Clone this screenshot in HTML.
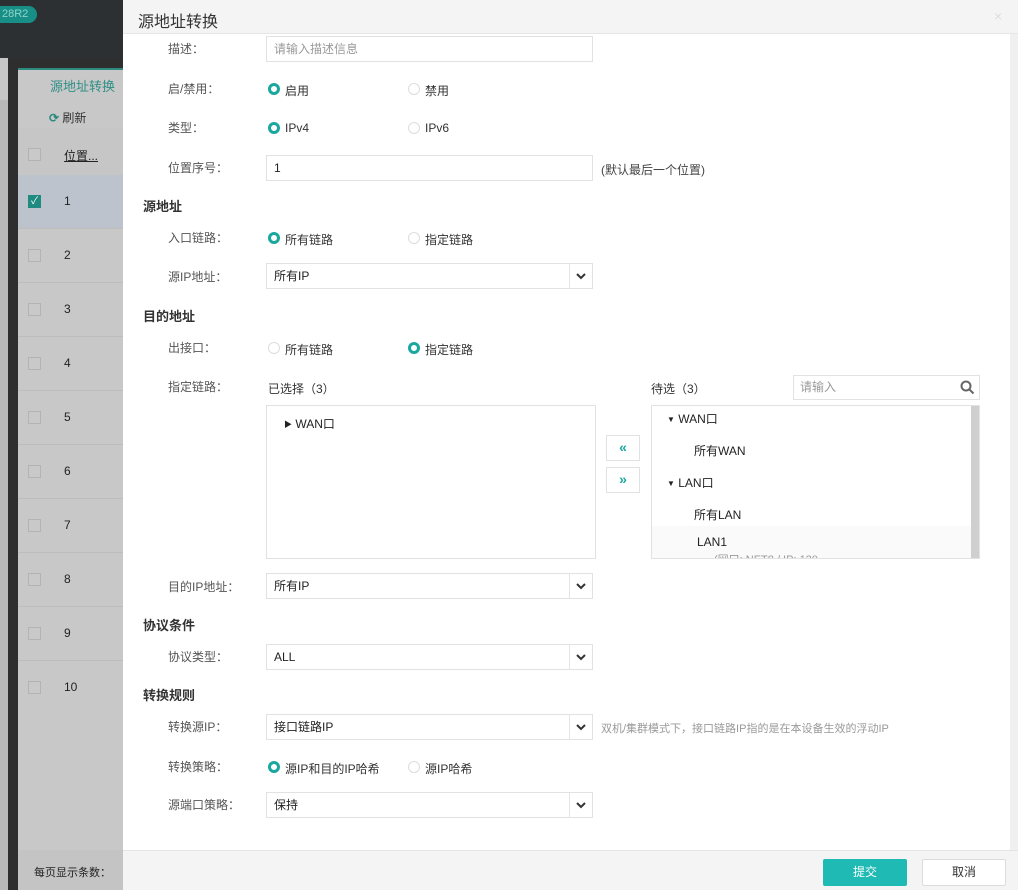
<!DOCTYPE html>
<html><head><meta charset="utf-8"><style>
*{box-sizing:border-box;margin:0;padding:0}
body{width:1018px;height:890px;position:relative;overflow:hidden;font-family:"Liberation Sans","Noto Sans CJK SC",sans-serif;font-size:12px;color:#333;background:#c6c6c6}
.a{position:absolute}
.lbl{position:absolute;left:168px;font-size:12px;color:#555;line-height:14px}
.sec{position:absolute;left:143px;font-size:13px;font-weight:bold;color:#333}
.inp{position:absolute;left:266px;width:327px;height:26px;border:1px solid #e2e2e2;background:#fff;padding-left:7px;line-height:24px;font-size:12px;color:#222}
.sel:after{content:"";position:absolute;right:22px;top:0;height:24px;border-left:1px solid #e4e4e4}
.chev{position:absolute;right:6px;top:8px}
.r{position:absolute;width:12px;height:12px;border-radius:50%;border:1px solid #ddd;background:#fff}
.r.on{border:3px solid #1aa89e}
.rt{position:absolute;font-size:12px;color:#333}
.row{position:absolute;left:18px;width:105px;height:54px;border-bottom:1px solid #bdbdbd}
.cb{position:absolute;left:10px;width:13px;height:13px;border:1px solid #b3b3b3;background:#c9c9c9}
.num{position:absolute;left:46px;font-size:12px;color:#222}
</style></head><body>
<!-- background page -->
<div class="a" style="left:0;top:0;width:123px;height:58px;background:#2c3033"></div>
<div class="a" style="left:0;top:6px;width:37px;height:17px;background:#178f86;border-radius:0 9px 9px 0;color:#8fd3cc;font-size:11px;line-height:17px;padding-left:2px">28R2</div>
<div class="a" style="left:0;top:58px;width:8px;height:832px;background:#b9b9b9"></div>
<div class="a" style="left:0;top:58px;width:8px;height:42px;background:#c7c7c7"></div>
<div class="a" style="left:8px;top:58px;width:10px;height:832px;background:#2e2e2e"></div>
<div class="a" style="left:18px;top:58px;width:105px;height:12px;background:#2e2e2e"></div>
<div class="a" style="left:18px;top:68px;width:105px;height:2px;background:#2f8a80"></div>
<div class="a" style="left:18px;top:70px;width:105px;height:780px;background:#c8c8c8"></div>
<div class="a" style="left:50px;top:76px;font-size:13px;color:#2f8f86">源地址转换</div>
<div class="a" style="left:49px;top:109px;font-size:12px;color:#333"><span style="color:#2b8a7f;font-weight:bold">⟳</span> 刷新</div>
<div class="row" style="top:128px;background:#c6c6c6"><div class="cb" style="top:20px"></div><div class="num" style="top:19px;text-decoration:underline">位置...</div></div>
<div class="row" style="top:175px;background:#bcc3cc"><div class="cb" style="top:20px;background:#1f8a80;border-color:#1f8a80;color:#fff;font-size:10px;line-height:11px;text-align:center">✓</div><div class="num" style="top:19px">1</div></div>
<div class="row" style="top:229px"><div class="cb" style="top:20px"></div><div class="num" style="top:19px">2</div></div>
<div class="row" style="top:283px"><div class="cb" style="top:20px"></div><div class="num" style="top:19px">3</div></div>
<div class="row" style="top:337px"><div class="cb" style="top:20px"></div><div class="num" style="top:19px">4</div></div>
<div class="row" style="top:391px"><div class="cb" style="top:20px"></div><div class="num" style="top:19px">5</div></div>
<div class="row" style="top:445px"><div class="cb" style="top:20px"></div><div class="num" style="top:19px">6</div></div>
<div class="row" style="top:499px"><div class="cb" style="top:20px"></div><div class="num" style="top:19px">7</div></div>
<div class="row" style="top:553px"><div class="cb" style="top:20px"></div><div class="num" style="top:19px">8</div></div>
<div class="row" style="top:607px"><div class="cb" style="top:20px"></div><div class="num" style="top:19px">9</div></div>
<div class="row" style="top:661px;border:0"><div class="cb" style="top:20px"></div><div class="num" style="top:19px">10</div></div>
<div class="a" style="left:18px;top:850px;width:105px;height:40px;background:#c4c4c4"></div>
<div class="a" style="left:34px;top:864px;font-size:11px;color:#222">每页显示条数：</div>

<!-- modal -->
<div class="a" style="left:123px;top:0;width:895px;height:890px;background:#fff"></div>
<div class="a" style="left:123px;top:0;width:895px;height:34px;background:#f4f4f4;border-bottom:1px solid #e6e6e6"></div>
<div class="a" style="left:138px;top:8px;font-size:16px;color:#333">源地址转换</div>
<div class="a" style="left:994px;top:8px;font-size:14px;color:#ddd">×</div>
<div class="a" style="left:1010px;top:34px;width:8px;height:816px;background:#f0f0f0"></div>

<div class="lbl" style="top:42px">描述：</div>
<div class="inp" style="top:36px;color:#999">请输入描述信息</div>
<div class="lbl" style="top:82px">启/禁用：</div>
<div class="r on" style="left:268px;top:83px"></div><div class="rt" style="left:285px;top:82px">启用</div>
<div class="r" style="left:408px;top:83px"></div><div class="rt" style="left:425px;top:82px">禁用</div>
<div class="lbl" style="top:121px">类型：</div>
<div class="r on" style="left:268px;top:122px"></div><div class="rt" style="left:285px;top:121px">IPv4</div>
<div class="r" style="left:408px;top:122px"></div><div class="rt" style="left:425px;top:121px">IPv6</div>
<div class="lbl" style="top:161px">位置序号：</div>
<div class="inp" style="top:155px">1</div>
<div class="a" style="left:601px;top:161px;color:#444">(默认最后一个位置)</div>

<div class="sec" style="top:196px">源地址</div>
<div class="lbl" style="top:231px">入口链路：</div>
<div class="r on" style="left:268px;top:232px"></div><div class="rt" style="left:285px;top:231px">所有链路</div>
<div class="r" style="left:408px;top:232px"></div><div class="rt" style="left:425px;top:231px">指定链路</div>
<div class="lbl" style="top:270px">源IP地址：</div>
<div class="inp sel" style="top:263px">所有IP<svg class="chev" width="10" height="8" viewBox="0 0 10 8"><path d="M1 2l4 4 4-4" stroke="#333" stroke-width="2" fill="none"/></svg></div>

<div class="sec" style="top:306px">目的地址</div>
<div class="lbl" style="top:341px">出接口：</div>
<div class="r" style="left:268px;top:342px"></div><div class="rt" style="left:285px;top:341px">所有链路</div>
<div class="r on" style="left:408px;top:342px"></div><div class="rt" style="left:425px;top:341px">指定链路</div>
<div class="lbl" style="top:380px">指定链路：</div>
<div class="a" style="left:268px;top:380px">已选择（3）</div>
<div class="a" style="left:266px;top:405px;width:330px;height:154px;border:1px solid #e2e2e2"></div>
<div class="a" style="left:284px;top:415px;font-size:12px;color:#222"><span style="font-size:8px;vertical-align:1px">▶</span> WAN口</div>
<div class="a" style="left:606px;top:435px;width:34px;height:26px;border:1px solid #e2e2e2;color:#1aa89e;text-align:center;line-height:22px;font-weight:bold;font-size:14px">«</div>
<div class="a" style="left:606px;top:467px;width:34px;height:26px;border:1px solid #e2e2e2;color:#1aa89e;text-align:center;line-height:22px;font-weight:bold;font-size:14px">»</div>
<div class="a" style="left:651px;top:380px">待选（3）</div>
<div class="a" style="left:793px;top:375px;width:187px;height:25px;border:1px solid #e2e2e2;padding-left:6px;line-height:23px;color:#999">请输入
<svg class="a" style="right:4px;top:4px" width="15" height="15" viewBox="0 0 15 15"><circle cx="6" cy="6" r="4.5" stroke="#666" stroke-width="2" fill="none"/><path d="M9.5 9.5l4 4" stroke="#666" stroke-width="2"/></svg></div>
<div class="a" style="left:651px;top:405px;width:329px;height:154px;border:1px solid #e2e2e2;overflow:hidden">
 <div class="a" style="left:319px;top:0;width:8px;height:152px;background:#cfcfcf"></div>
 <div class="a" style="left:15px;top:4px;color:#222"><span style="font-size:8px;vertical-align:1px">▼</span> WAN口</div>
 <div class="a" style="left:42px;top:36px;color:#222">所有WAN</div>
 <div class="a" style="left:15px;top:68px;color:#222"><span style="font-size:8px;vertical-align:1px">▼</span> LAN口</div>
 <div class="a" style="left:42px;top:100px;color:#222">所有LAN</div>
 <div class="a" style="left:0;top:120px;width:319px;height:34px;background:#fafafa"></div>
 <div class="a" style="left:45px;top:129px;color:#222">LAN1</div>
 <div class="a" style="left:62px;top:145px;color:#999;font-size:11px">(网口: NET8 / IP: 120</div>
</div>
<div class="lbl" style="top:580px">目的IP地址：</div>
<div class="inp sel" style="top:573px">所有IP<svg class="chev" width="10" height="8" viewBox="0 0 10 8"><path d="M1 2l4 4 4-4" stroke="#333" stroke-width="2" fill="none"/></svg></div>

<div class="sec" style="top:615px">协议条件</div>
<div class="lbl" style="top:650px">协议类型：</div>
<div class="inp sel" style="top:644px">ALL<svg class="chev" width="10" height="8" viewBox="0 0 10 8"><path d="M1 2l4 4 4-4" stroke="#333" stroke-width="2" fill="none"/></svg></div>

<div class="sec" style="top:685px">转换规则</div>
<div class="lbl" style="top:720px">转换源IP：</div>
<div class="inp sel" style="top:714px">接口链路IP<svg class="chev" width="10" height="8" viewBox="0 0 10 8"><path d="M1 2l4 4 4-4" stroke="#333" stroke-width="2" fill="none"/></svg></div>
<div class="a" style="left:601px;top:720px;color:#999;font-size:11px">双机/集群模式下，接口链路IP指的是在本设备生效的浮动IP</div>
<div class="lbl" style="top:760px">转换策略：</div>
<div class="r on" style="left:268px;top:761px"></div><div class="rt" style="left:285px;top:760px">源IP和目的IP哈希</div>
<div class="r" style="left:408px;top:761px"></div><div class="rt" style="left:425px;top:760px">源IP哈希</div>
<div class="lbl" style="top:798px">源端口策略：</div>
<div class="inp sel" style="top:792px">保持<svg class="chev" width="10" height="8" viewBox="0 0 10 8"><path d="M1 2l4 4 4-4" stroke="#333" stroke-width="2" fill="none"/></svg></div>

<div class="a" style="left:123px;top:850px;width:895px;height:40px;background:#f4f4f4;border-top:1px solid #e4e4e4"></div>
<div class="a" style="left:823px;top:859px;width:84px;height:27px;background:#1fbab3;color:#fff;text-align:center;line-height:27px;border-radius:2px">提交</div>
<div class="a" style="left:922px;top:859px;width:84px;height:27px;background:#fff;border:1px solid #dcdcdc;color:#333;text-align:center;line-height:25px;border-radius:2px">取消</div>
</body></html>
